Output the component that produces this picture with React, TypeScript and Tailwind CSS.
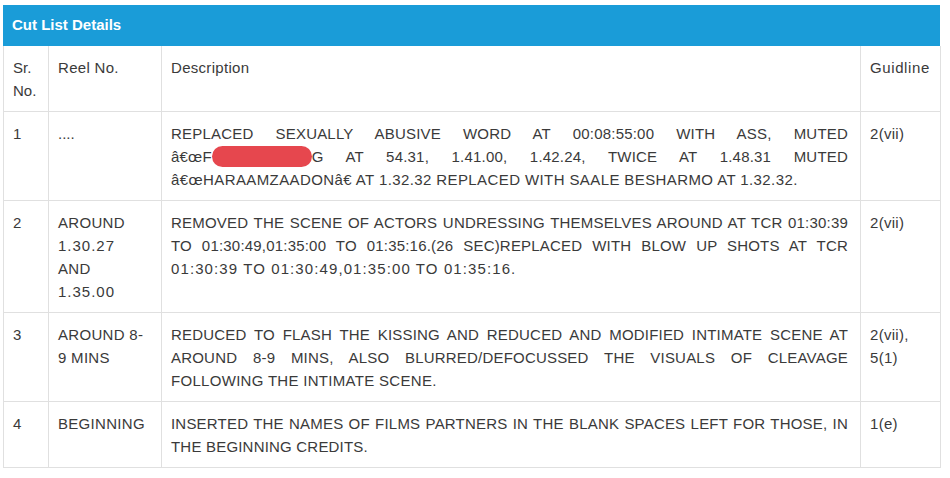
import React from "react";

const J = ({ children }: { children: React.ReactNode }) => (
  <div className="text-justify [text-align-last:justify] tracking-[0.2px]">{children}</div>
);
const L = ({ children, cls = "" }: { children: React.ReactNode; cls?: string }) => (
  <div className={cls}>{children}</div>
);

const cell = "border-r border-b border-[#e0e0e0] pt-[10px] pb-[9px] pl-[9px]";

export default function App() {
  return (
    <div
      className="w-[950px] h-[478px] bg-white pt-[5px] pl-[3px] text-[#3a3a3a]"
      style={{ fontFamily: '"Liberation Sans", Arial, sans-serif' }}
    >
      <div className="w-[937px]">
        <div className="h-[41px] bg-[#1a9cd8] flex items-center pl-[9px] text-white font-bold text-[15px]">
          Cut List Details
        </div>
        <div className="grid grid-cols-[45px_113px_699px_80px] border-l border-[#e0e0e0] text-[15px] leading-[23px]">
          {/* header */}
          <div className={cell}>
            <L>Sr.</L>
            <L>No.</L>
          </div>
          <div className={cell + " tracking-[0.3px]"}>Reel No.</div>
          <div className={cell + " pr-[11px] tracking-[0.3px]"}>Description</div>
          <div className={cell + " tracking-[0.6px]"}>Guidline</div>

          {/* row 1 */}
          <div className={cell}>1</div>
          <div className={cell}>....</div>
          <div className={cell + " pr-[12px]"}>
            <J>REPLACED SEXUALLY ABUSIVE WORD AT 00:08:55:00 WITH ASS, MUTED</J>
            <J>
              â€œF
              <span className="inline-block align-middle w-[100px] h-[21px] -mt-[3px] rounded-full bg-[#e6474e]"></span>
              G AT 54.31, 1.41.00, 1.42.24, TWICE AT 1.48.31 MUTED
            </J>
            <L cls="tracking-[0.4px]">
              â€œHARAAMZAADONâ€ AT 1.32.32 REPLACED WITH SAALE BESHARMO AT 1.32.32.
            </L>
          </div>
          <div className={cell + " tracking-[0.3px]"}>2(vii)</div>

          {/* row 2 */}
          <div className={cell}>2</div>
          <div className={cell}>
            <L cls="tracking-[0.3px]">AROUND</L>
            <L cls="tracking-[1px]">1.30.27</L>
            <L cls="tracking-[0.3px]">AND</L>
            <L cls="tracking-[1px]">1.35.00</L>
          </div>
          <div className={cell + " pr-[12px]"}>
            <J>REMOVED THE SCENE OF ACTORS UNDRESSING THEMSELVES AROUND AT TCR 01:30:39</J>
            <J>TO 01:30:49,01:35:00 TO 01:35:16.(26 SEC)REPLACED WITH BLOW UP SHOTS AT TCR</J>
            <L cls="tracking-[1.1px]">01:30:39 TO 01:30:49,01:35:00 TO 01:35:16.</L>
          </div>
          <div className={cell + " tracking-[0.3px]"}>2(vii)</div>

          {/* row 3 */}
          <div className={cell}>3</div>
          <div className={cell + " tracking-[0.3px]"}>
            <L>AROUND 8-</L>
            <L>9 MINS</L>
          </div>
          <div className={cell + " pr-[12px]"}>
            <J>REDUCED TO FLASH THE KISSING AND REDUCED AND MODIFIED INTIMATE SCENE AT</J>
            <J>AROUND 8-9 MINS, ALSO BLURRED/DEFOCUSSED THE VISUALS OF CLEAVAGE</J>
            <L cls="tracking-[0.3px]">FOLLOWING THE INTIMATE SCENE.</L>
          </div>
          <div className={cell + " tracking-[0.3px]"}>
            <L>2(vii),</L>
            <L>5(1)</L>
          </div>

          {/* row 4 */}
          <div className={cell}>4</div>
          <div className={cell + " tracking-[0.3px]"}>BEGINNING</div>
          <div className={cell + " pr-[12px]"}>
            <J>INSERTED THE NAMES OF FILMS PARTNERS IN THE BLANK SPACES LEFT FOR THOSE, IN</J>
            <L cls="tracking-[0.2px]">THE BEGINNING CREDITS.</L>
          </div>
          <div className={cell + " tracking-[0.3px]"}>1(e)</div>
        </div>
      </div>
    </div>
  );
}
